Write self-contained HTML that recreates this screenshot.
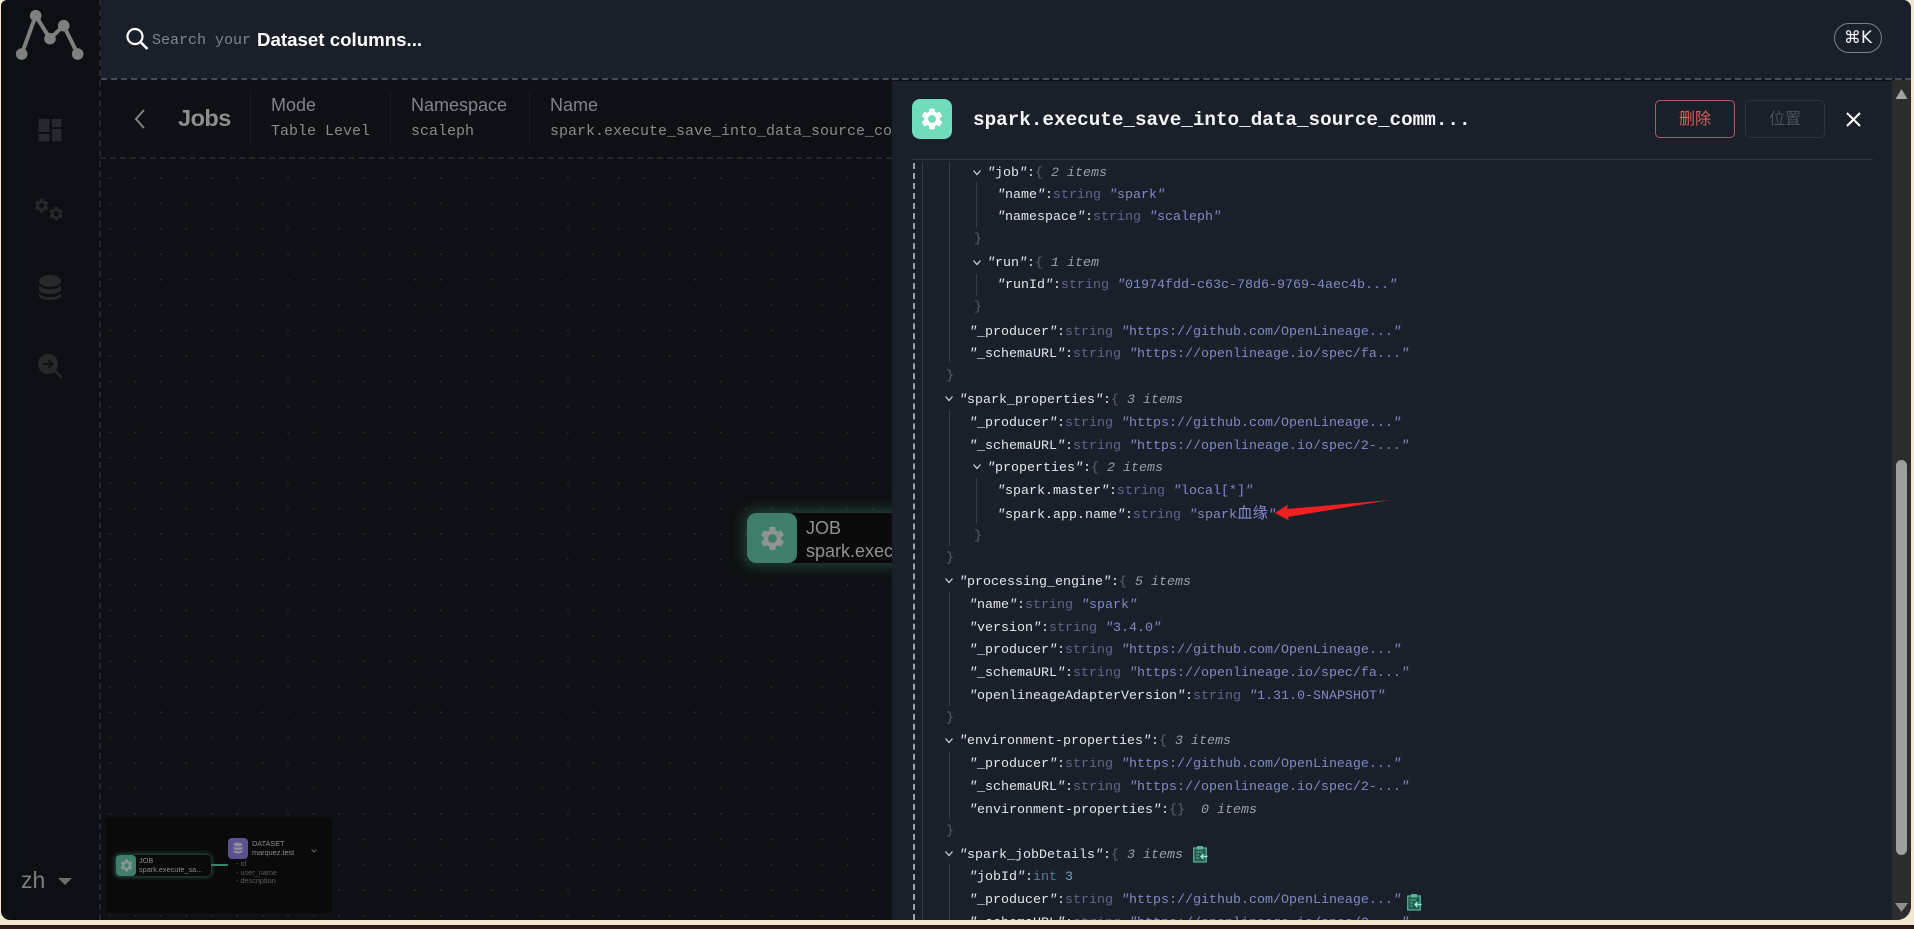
<!DOCTYPE html>
<html lang="zh"><head><meta charset="utf-8"><title>Marquez</title>
<style>
*{box-sizing:border-box}
html,body{margin:0;padding:0;width:1914px;height:929px;overflow:hidden;background:#f2e8cf;font-family:"Liberation Sans","Noto Sans CJK SC",sans-serif}
.abs,.r,.l{position:absolute}
#strip{position:absolute;left:0;top:925px;width:1914px;height:4px;background:#2b1a15}
#app{position:absolute;left:1px;top:0;width:1910px;height:920px;background:#0c0f13;border-radius:6px 8px 14px 9px;overflow:hidden}
#shift{position:absolute;left:-1px;top:0;width:1914px;height:920px}
#top{position:absolute;left:101px;top:0;width:1813px;height:79px;background:#1a202a}
#hd{position:absolute;left:101px;top:80px;width:800px;height:78px;background:#0d1116}
#canvas{position:absolute;left:101px;top:159px;width:800px;height:761px;background-color:#0d1014;
background-image:radial-gradient(circle at center,#2e3136 0,#2e3136 .7px,transparent 1px);background-size:25.45px 25.45px;background-position:-3.7px 6.3px}
.dh{position:absolute;height:0;border-top:2px dashed #474d55}
.dv{position:absolute;width:0;border-left:2px dashed #24282d}
.lab{position:absolute;color:#7f8488;font-size:18px;line-height:22px}
.val{position:absolute;color:#868a8c;font:15px/20px "Liberation Mono",monospace}
.sep{position:absolute;width:1px;top:92px;height:53px;background:#181c21}
#drawer{position:absolute;left:892px;top:81px;width:1000px;height:839px;background:#1a202a}
#sb{position:absolute;left:1892px;top:80px;width:19px;height:840px;background:#2c2c2c}
#rows{position:absolute;left:0;top:162px;width:1892px;height:758px;overflow:hidden;font:13.33px/22px "Liberation Mono","Noto Sans CJK SC",monospace;color:#e4e7ea}
.r{white-space:pre;height:22px}
.r i{font-style:italic}
.t{color:#5f658f}.v{color:#8287c9}.b{color:#5d6269}.n{font-style:italic;color:#9ba0a6}
.ti{color:#527fa6}.iv{color:#6f9fc4}
.cj{font-size:15.5px}
.l{width:1px;background:#3a3f47}
.sb{position:absolute;width:8px;height:6px}
svg{display:block;overflow:visible}
</style></head><body>
<div id="strip"></div>
<div id="app"><div id="shift">
<div id="top"></div><div id="hd"></div><div id="canvas"></div>

<svg class="abs" style="left:0;top:0" width="100" height="80"><g stroke="#7f7f7f" stroke-width="4" fill="#7f7f7f"><path d="M21.7 54L35.7 15.7L50 38.7L63.7 25.7L77.7 54" fill="none"/><circle cx="35.7" cy="15.7" r="3.800"/><circle cx="21.7" cy="54" r="3.800"/><circle cx="50" cy="38.7" r="3.800"/><circle cx="63.7" cy="25.7" r="3.800"/><circle cx="77.7" cy="54" r="3.800"/></g></svg>

<svg class="abs" style="left:0;top:100px" width="100" height="300">
<defs><path id="gear" d="M19.14 12.94c.04-.3.06-.61.06-.94 0-.32-.02-.64-.07-.94l2.03-1.58c.18-.14.23-.41.12-.61l-1.92-3.32c-.12-.22-.37-.29-.59-.22l-2.39.96c-.5-.38-1.03-.7-1.62-.94l-.36-2.54c-.04-.24-.24-.41-.48-.41h-3.84c-.24 0-.43.17-.47.41l-.36 2.54c-.59.24-1.13.57-1.62.94l-2.39-.96c-.22-.08-.47 0-.59.22L2.74 8.87c-.12.21-.08.47.12.61l2.03 1.58c-.05.3-.09.63-.09.94s.02.64.07.94l-2.03 1.58c-.18.14-.23.41-.12.61l1.92 3.32c.12.22.37.29.59.22l2.39-.96c.5.38 1.03.7 1.62.94l.36 2.54c.05.24.24.41.48.41h3.84c.24 0 .44-.17.47-.41l.36-2.54c.59-.24 1.13-.56 1.62-.94l2.39.96c.22.08.47 0 .59-.22l1.92-3.32c.12-.22.07-.47-.12-.61l-2.01-1.58zM12 15.6c-1.98 0-3.6-1.62-3.6-3.6s1.62-3.6 3.6-3.6 3.6 1.62 3.6 3.6-1.62 3.6-3.6 3.6z"/></defs>
<g fill="#25282c">
<rect x="38.5" y="19" width="11" height="13"/><rect x="52" y="19" width="9.5" height="8"/><rect x="38.5" y="34" width="11" height="7.5"/><rect x="52" y="29" width="9.5" height="12.5"/>
<use href="#gear" transform="translate(33,97) scale(.72)"/><use href="#gear" transform="translate(47.5,105) scale(.72)"/>
<path d="M39 181c0-3.500 5-6 11-6s11 2.500 11 6-5 6-11 6-11-2.500-11-6zM39 185.500c3 3 7 3.500 11 3.500s8-.5 11-3.500v5c-3 3-7 3.500-11 3.500s-8-.5-11-3.500zM39 193.500c3 3 7 3.500 11 3.500s8-.5 11-3.500v2.500c0 2.500-5 4-11 4s-11-1.500-11-4z"/>
<circle cx="48" cy="264" r="10"/>
</g>
<path d="M55 271L62 278" stroke="#25282c" stroke-width="2.6"/>
<path d="M43 264H52M48.500 260L52.500 264L48.500 268" stroke="#0c0f13" stroke-width="1.800" fill="none"/>
</svg>

<div class="abs" style="left:21px;top:866px;color:#7d7d7d;font-size:23px;line-height:28px">zh</div>
<svg class="abs" style="left:58px;top:878px" width="14" height="8"><path d="M0 0H14L7 7Z" fill="#6d6d6d"/></svg>

<svg class="abs" style="left:122px;top:25px" width="30" height="28"><circle cx="13" cy="11.500" r="7.500" fill="none" stroke="#fff" stroke-width="2.200"/><path d="M18.500 17L25.500 24" stroke="#fff" stroke-width="2.600"/></svg>
<div class="abs" style="left:152px;top:30px;color:#7f858c;font:15px/22px 'Liberation Mono',monospace;white-space:pre">Search your</div>
<div class="abs" style="left:257px;top:29px;color:#fff;font:bold 18.700px/22px 'Liberation Sans',sans-serif;white-space:pre">Dataset columns...</div>
<div class="abs" style="left:1834px;top:23px;width:48px;height:30px;border:1px solid #7a7f86;border-radius:15px;color:#f2f4f5;font:17px/28px 'DejaVu Sans',sans-serif;text-align:center">⌘K</div>

<div class="dv" style="left:99px;top:0;height:920px"></div>
<div class="dh" style="left:101px;top:78px;width:1810px"></div>
<div class="dh" style="left:100px;top:157px;width:792px;border-top-color:#24282d"></div>

<svg class="abs" style="left:132px;top:108px" width="16" height="22"><path d="M12 2L4 11L12 20" fill="none" stroke="#7f8386" stroke-width="2"/></svg>
<div class="abs" style="left:178px;top:104px;color:#8b8e90;font:bold 23.500px/28px 'Liberation Sans',sans-serif;letter-spacing:-.5px">Jobs</div>
<div class="sep" style="left:250px"></div><div class="sep" style="left:390px"></div><div class="sep" style="left:529px"></div>
<div class="lab" style="left:271px;top:94px">Mode</div><div class="val" style="left:271px;top:122px">Table Level</div>
<div class="lab" style="left:411px;top:94px">Namespace</div><div class="val" style="left:411px;top:122px">scaleph</div>
<div class="lab" style="left:550px;top:94px">Name</div>
<div class="val" style="left:550px;top:122px;width:342px;overflow:hidden;white-space:pre">spark.execute_save_into_data_source_command</div>

<div class="abs" style="left:747px;top:513px;width:160px;height:50px;background:#0a0a0a;border-radius:8px;box-shadow:0 0 14px 3px rgba(70,150,125,.38)"></div>
<div class="abs" style="left:747px;top:513px;width:50px;height:50px;background:#3f7e6c;border-radius:9px"></div>
<svg class="abs" style="left:757.500px;top:523.500px" width="29" height="29" viewBox="0 0 24 24"><use href="#gear" fill="#8f9391"/></svg>
<div class="abs" style="left:806px;top:517px;width:86px;overflow:hidden;color:#8f9292;font-size:18px;line-height:22.500px;white-space:pre">JOB
spark.execute</div>

<div class="abs" style="left:106px;top:818px;width:226px;height:95px;background:#0a0a0a"></div>
<div class="abs" style="left:116px;top:855px;width:95px;height:21px;background:#0a0a0a;border-radius:4px;box-shadow:0 0 5px 1px rgba(70,150,125,.55)"></div>
<div class="abs" style="left:116px;top:855px;width:20px;height:21px;background:#3f7e6c;border-radius:4px"></div>
<svg class="abs" style="left:119px;top:858px" width="15" height="15" viewBox="0 0 24 24"><use href="#gear" fill="#8f9391"/></svg>
<div class="abs" style="left:211px;top:864px;width:17px;height:2px;background:#3f7e6c"></div>
<div class="abs" style="left:139px;top:857px;color:#8a8d8d;font-size:7.300px;line-height:8.500px;white-space:pre">JOB
spark.execute_sa...</div>
<div class="abs" style="left:228px;top:838px;width:20px;height:21px;background:#5b5190;border-radius:4px"></div>
<svg class="abs" style="left:232px;top:842px" width="12" height="13" viewBox="0 0 12 13"><ellipse cx="6" cy="2.500" rx="4.500" ry="2" fill="#8f8fa0"/><path d="M1.500 4.500c2 1.500 7 1.500 9 0V7c-2 1.500-7 1.500-9 0zM1.500 8c2 1.500 7 1.500 9 0v2c-2 2-7 2-9 0z" fill="#8f8fa0"/></svg>
<div class="abs" style="left:252px;top:840px;color:#8a8d8d;font-size:7.300px;line-height:8.500px;white-space:pre">DATASET
marquez.test</div>
<svg class="abs" style="left:311px;top:849px" width="6" height="4"><path d="M.5.5L3 3L5.500.5" fill="none" stroke="#666"/></svg>
<div class="abs" style="left:236px;top:860px;color:#5a5c5c;font-size:7.300px;line-height:8.700px;white-space:pre">- id
- user_name
- description</div>

<div id="drawer"></div>
<div class="abs" style="left:912px;top:99px;width:40px;height:40px;background:#6fdcbc;border-radius:8px"></div>
<svg class="abs" style="left:919px;top:106px" width="26" height="26" viewBox="0 0 24 24"><use href="#gear" fill="#fff"/></svg>
<div class="abs" style="left:973px;top:107px;color:#f4f5f6;font:bold 19.300px/26px 'Liberation Mono',monospace;white-space:pre">spark.execute_save_into_data_source_comm...</div>
<div class="abs" style="left:1655px;top:100px;width:80px;height:38px;border:1px solid #b05a5e;border-radius:5px;color:#d8605f;font-size:16px;line-height:38px;text-align:center">删除</div>
<div class="abs" style="left:1745px;top:100px;width:80px;height:38px;border:1px solid #2f343b;border-radius:5px;color:#4a5058;font-size:16px;line-height:38px;text-align:center">位置</div>
<svg class="abs" style="left:1846px;top:112px" width="15" height="15"><path d="M1 1L14 14M14 1L1 14" stroke="#fff" stroke-width="2"/></svg>
<div class="abs" style="left:912px;top:159px;width:961px;height:1px;background:#343941"></div>

<div id="rows">
<div class="abs" style="left:912.500px;top:1px;height:757px;width:0;border-left:2px dashed #a0a2a4"></div>
<div class="l" style="left:922px;top:0;height:758px;background:#343941"></div>
<div class="l" style="left:949px;top:0;height:200px"></div>
<div class="l" style="left:949px;top:248px;height:136px"></div>
<div class="l" style="left:949px;top:430px;height:114px"></div>
<div class="l" style="left:949px;top:590px;height:67px"></div>
<div class="l" style="left:949px;top:703px;height:55px"></div>
<div class="l" style="left:976px;top:20px;height:45px"></div>
<div class="l" style="left:976px;top:112px;height:22px"></div>
<div class="l" style="left:976px;top:316px;height:45px"></div>

<svg class="sb" style="left:973px;top:8px" viewBox="0 0 8 6"><path d="M.5.5L4 4.500L7.500.5" fill="none" stroke="#c9cdd1" stroke-width="1.300"/></svg>
<svg class="sb" style="left:973px;top:98px" viewBox="0 0 8 6"><path d="M.5.5L4 4.500L7.500.5" fill="none" stroke="#c9cdd1" stroke-width="1.300"/></svg>
<svg class="sb" style="left:945px;top:234px" viewBox="0 0 8 6"><path d="M.5.5L4 4.500L7.500.5" fill="none" stroke="#c9cdd1" stroke-width="1.300"/></svg>
<svg class="sb" style="left:973px;top:302px" viewBox="0 0 8 6"><path d="M.5.5L4 4.500L7.500.5" fill="none" stroke="#c9cdd1" stroke-width="1.300"/></svg>
<svg class="sb" style="left:945px;top:416px" viewBox="0 0 8 6"><path d="M.5.5L4 4.500L7.500.5" fill="none" stroke="#c9cdd1" stroke-width="1.300"/></svg>
<svg class="sb" style="left:945px;top:576px" viewBox="0 0 8 6"><path d="M.5.5L4 4.500L7.500.5" fill="none" stroke="#c9cdd1" stroke-width="1.300"/></svg>
<svg class="sb" style="left:945px;top:689px" viewBox="0 0 8 6"><path d="M.5.5L4 4.500L7.500.5" fill="none" stroke="#c9cdd1" stroke-width="1.300"/></svg>

<div class="r" style="left:987px;top:1px"><i>"</i>job<i>"</i>:<span class="b">{</span> <span class="n">2 items</span></div>
<div class="r" style="left:997px;top:23px"><i>"</i>name<i>"</i>:<span class="t">string</span> <span class="v"><i>"</i>spark<i>"</i></span></div>
<div class="r" style="left:997px;top:45px"><i>"</i>namespace<i>"</i>:<span class="t">string</span> <span class="v"><i>"</i>scaleph<i>"</i></span></div>
<div class="r b" style="left:974px;top:67px">}</div>
<div class="r" style="left:987px;top:91px"><i>"</i>run<i>"</i>:<span class="b">{</span> <span class="n">1 item</span></div>
<div class="r" style="left:997px;top:113px"><i>"</i>runId<i>"</i>:<span class="t">string</span> <span class="v"><i>"</i>01974fdd-c63c-78d6-9769-4aec4b...<i>"</i></span></div>
<div class="r b" style="left:974px;top:135px">}</div>
<div class="r" style="left:969px;top:160px"><i>"</i>_producer<i>"</i>:<span class="t">string</span> <span class="v"><i>"</i>https://github.com/OpenLineage...<i>"</i></span></div>
<div class="r" style="left:969px;top:182px"><i>"</i>_schemaURL<i>"</i>:<span class="t">string</span> <span class="v"><i>"</i>https://openlineage.io/spec/fa...<i>"</i></span></div>
<div class="r b" style="left:946px;top:204px">}</div>
<div class="r" style="left:959px;top:228px"><i>"</i>spark_properties<i>"</i>:<span class="b">{</span> <span class="n">3 items</span></div>
<div class="r" style="left:969px;top:251px"><i>"</i>_producer<i>"</i>:<span class="t">string</span> <span class="v"><i>"</i>https://github.com/OpenLineage...<i>"</i></span></div>
<div class="r" style="left:969px;top:274px"><i>"</i>_schemaURL<i>"</i>:<span class="t">string</span> <span class="v"><i>"</i>https://openlineage.io/spec/2-...<i>"</i></span></div>
<div class="r" style="left:987px;top:296px"><i>"</i>properties<i>"</i>:<span class="b">{</span> <span class="n">2 items</span></div>
<div class="r" style="left:997px;top:319px"><i>"</i>spark.master<i>"</i>:<span class="t">string</span> <span class="v"><i>"</i>local[*]<i>"</i></span></div>
<div class="r" style="left:997px;top:341px"><i>"</i>spark.app.name<i>"</i>:<span class="t">string</span> <span class="v"><i>"</i>spark<span class="cj">血缘</span><i>"</i></span></div>
<div class="r b" style="left:974px;top:364px">}</div>
<div class="r b" style="left:946px;top:386px">}</div>
<div class="r" style="left:959px;top:410px"><i>"</i>processing_engine<i>"</i>:<span class="b">{</span> <span class="n">5 items</span></div>
<div class="r" style="left:969px;top:433px"><i>"</i>name<i>"</i>:<span class="t">string</span> <span class="v"><i>"</i>spark<i>"</i></span></div>
<div class="r" style="left:969px;top:456px"><i>"</i>version<i>"</i>:<span class="t">string</span> <span class="v"><i>"</i>3.4.0<i>"</i></span></div>
<div class="r" style="left:969px;top:478px"><i>"</i>_producer<i>"</i>:<span class="t">string</span> <span class="v"><i>"</i>https://github.com/OpenLineage...<i>"</i></span></div>
<div class="r" style="left:969px;top:501px"><i>"</i>_schemaURL<i>"</i>:<span class="t">string</span> <span class="v"><i>"</i>https://openlineage.io/spec/fa...<i>"</i></span></div>
<div class="r" style="left:969px;top:524px"><i>"</i>openlineageAdapterVersion<i>"</i>:<span class="t">string</span> <span class="v"><i>"</i>1.31.0-SNAPSHOT<i>"</i></span></div>
<div class="r b" style="left:946px;top:546px">}</div>
<div class="r" style="left:959px;top:569px"><i>"</i>environment-properties<i>"</i>:<span class="b">{</span> <span class="n">3 items</span></div>
<div class="r" style="left:969px;top:592px"><i>"</i>_producer<i>"</i>:<span class="t">string</span> <span class="v"><i>"</i>https://github.com/OpenLineage...<i>"</i></span></div>
<div class="r" style="left:969px;top:615px"><i>"</i>_schemaURL<i>"</i>:<span class="t">string</span> <span class="v"><i>"</i>https://openlineage.io/spec/2-...<i>"</i></span></div>
<div class="r" style="left:969px;top:638px"><i>"</i>environment-properties<i>"</i>:<span class="b">{}</span>  <span class="n">0 items</span></div>
<div class="r b" style="left:946px;top:659px">}</div>
<div class="r" style="left:959px;top:683px"><i>"</i>spark_jobDetails<i>"</i>:<span class="b">{</span> <span class="n">3 items</span></div>
<div class="r" style="left:969px;top:705px"><i>"</i>jobId<i>"</i>:<span class="ti">int</span> <span class="iv">3</span></div>
<div class="r" style="left:969px;top:728px"><i>"</i>_producer<i>"</i>:<span class="t">string</span> <span class="v"><i>"</i>https://github.com/OpenLineage...<i>"</i></span></div>
<div class="r" style="left:969px;top:751px"><i>"</i>_schemaURL<i>"</i>:<span class="t">string</span> <span class="v"><i>"</i>https://openlineage.io/spec/2-...<i>"</i></span></div>
</div>

<svg class="abs" style="left:1193px;top:845px" width="15" height="18" viewBox="0 0 15 18"><rect x=".7" y="3" width="12.600" height="14" fill="#2b5a50" stroke="#55b59b" stroke-width="1.200"/><rect x="4" y="1" width="6" height="3.500" fill="#55b59b"/><path d="M3 7H9M3 10H6M3 13H6" stroke="#55b59b"/><path d="M14.500 11.500H8M10.500 9L8 11.500L10.500 14" stroke="#8ff0d0" stroke-width="1.400" fill="none"/></svg>
<svg class="abs" style="left:1407px;top:893px" width="15" height="18" viewBox="0 0 15 18"><rect x=".7" y="3" width="12.600" height="14" fill="#2b5a50" stroke="#55b59b" stroke-width="1.200"/><rect x="4" y="1" width="6" height="3.500" fill="#55b59b"/><path d="M3 7H9M3 10H6M3 13H6" stroke="#55b59b"/><path d="M14.500 11.500H8M10.500 9L8 11.500L10.500 14" stroke="#8ff0d0" stroke-width="1.400" fill="none"/></svg>

<svg class="abs" style="left:1270px;top:495px" width="125" height="30"><path d="M5 18L18 9.500L17 14L120 5L18 22L19 25.500Z" fill="#ee2020"/></svg>

<div id="sb"></div>
<svg class="abs" style="left:1892px;top:80px" width="19" height="840"><path d="M3.500 19L9.500 9L15.500 19Z" fill="#a3a3a3"/><rect x="4" y="380" width="11" height="395" rx="5.500" fill="#9e9e9e"/><path d="M3 823H16L9.500 832Z" fill="#8f8f8f"/></svg>
<div class="dh" style="left:892px;top:78px;width:1020px"></div>
</div></div>
</body></html>
